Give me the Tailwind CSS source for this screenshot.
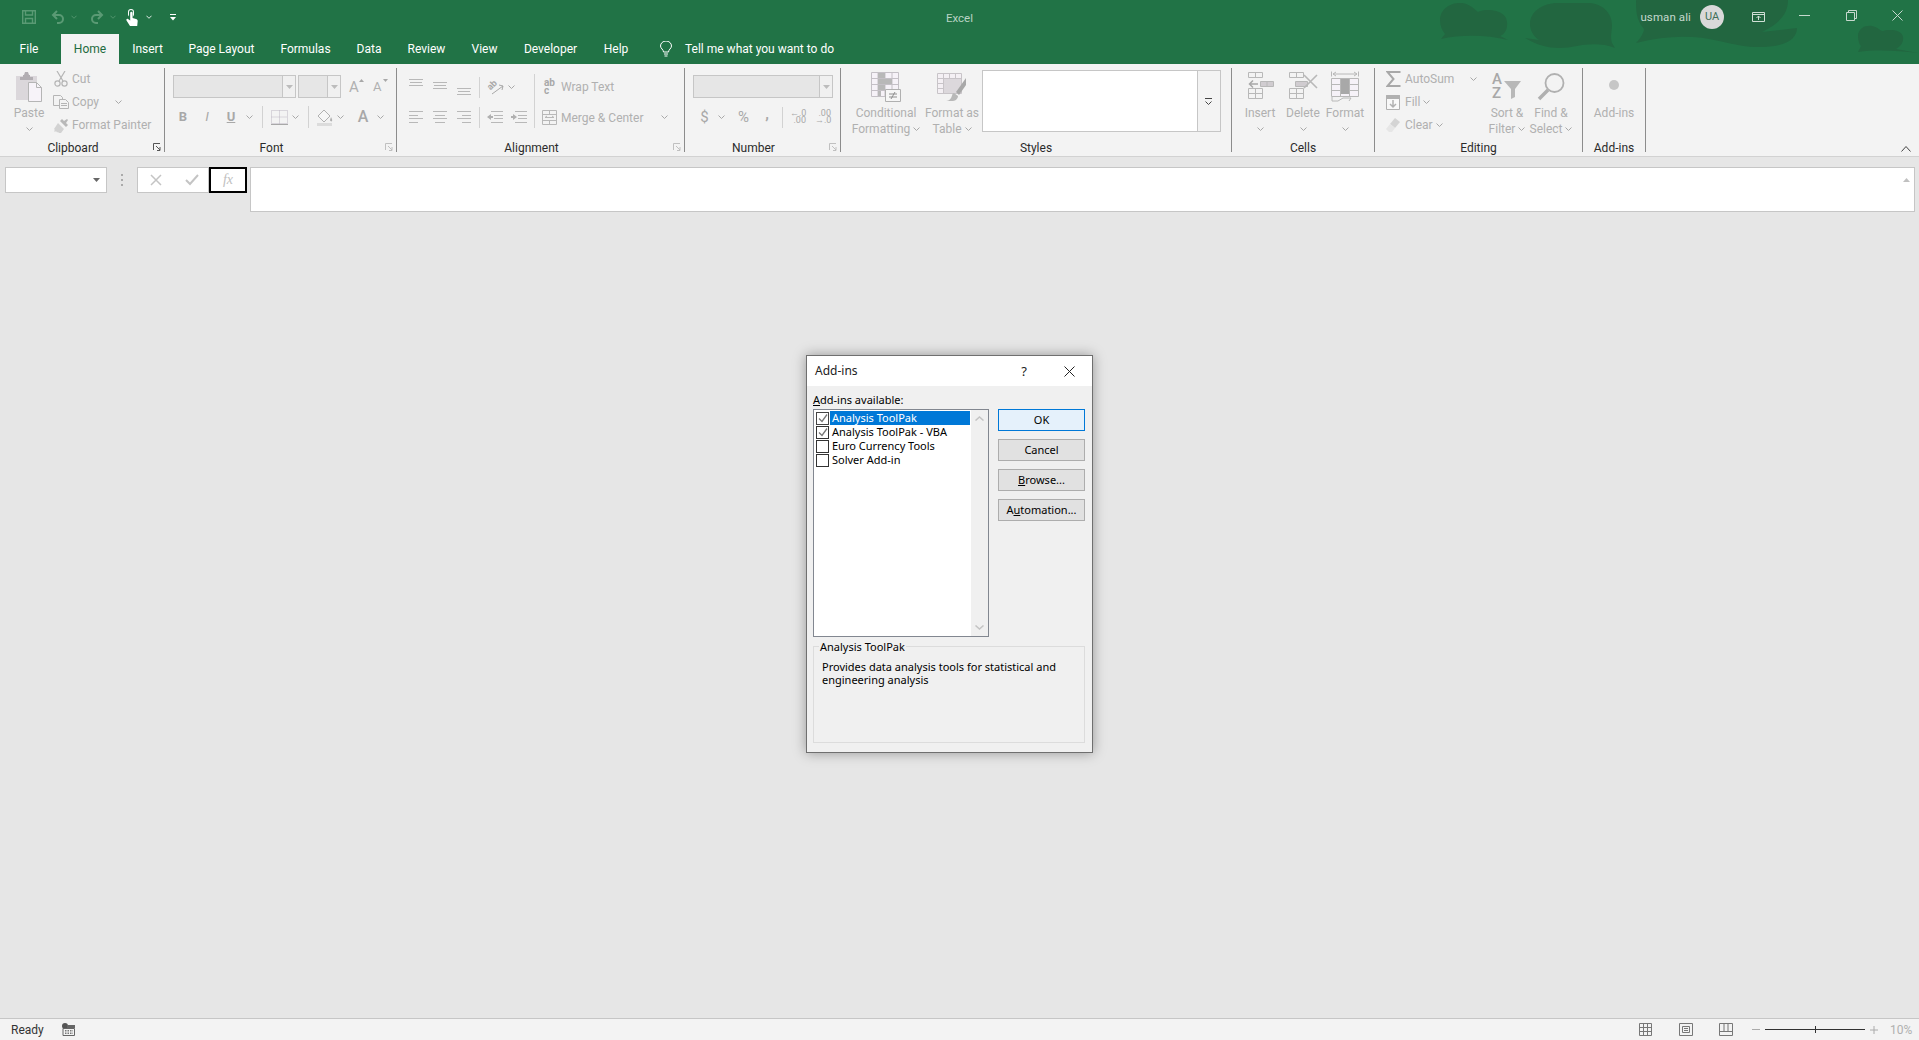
<!DOCTYPE html>
<html lang="en">
<head>
  <meta charset="UTF-8" />
  <title>Excel - Add-ins</title>
  <script src="https://cdn.jsdelivr.net/npm/@tailwindcss/browser@4"></script>
</head>
<body class="bg-[#e6e6e6] overflow-hidden">

<!-- shared icons -->
<svg class="hidden">
  <symbol id="chev" viewBox="0 0 7 4"><path d="M.5.5 3.500 3.500 6.500.5" fill="none" stroke="#a8a8a8"/></symbol>
  <symbol id="chevw" viewBox="0 0 7 4"><path d="M.5.5 3.500 3.500 6.500.5" fill="none" stroke="currentColor"/></symbol>
  <symbol id="launch" viewBox="0 0 8 8"><path d="M.5 7V.5H7M3 3l4 4M7 4v3.500H4" fill="none" stroke="currentColor"/></symbol>
  <symbol id="tri" viewBox="0 0 7 4"><path d="M0 0h7L3.500 4z" fill="currentColor"/></symbol>
  <symbol id="alignL" viewBox="0 0 14 12"><path d="M0 .5h14M0 4.500h9M0 7.500h14M0 11.500h9" stroke="#b8b8b8"/></symbol>
  <symbol id="alignC" viewBox="0 0 14 12"><path d="M0 .5h14M2 4.500h10M0 7.500h14M2 11.500h10" stroke="#b8b8b8"/></symbol>
  <symbol id="alignR" viewBox="0 0 14 12"><path d="M0 .5h14M5 4.500h9M0 7.500h14M5 11.500h9" stroke="#b8b8b8"/></symbol>
  <symbol id="lines3" viewBox="0 0 14 7"><path d="M0 .5h14M1 3.500h12M0 6.500h14" stroke="#b8b8b8"/></symbol>
</svg>

<div class="relative w-[1919px] h-[1040px] flex flex-col font-[Roboto] text-[12px] leading-[16px]">

  <!-- title bar + tabs -->
  <header class="relative h-[64px] bg-[#217346] text-white shrink-0 overflow-hidden">
    <svg class="absolute top-0 left-[1420px] w-[499px] h-[64px]" viewBox="0 0 499 64" fill="#226640">
      <path d="M20 20C20 8 32 2 42 3c8 1 12 6 16 9 8-4 24-2 28 6 3 8 0 16-6 18l8 4c-20-5-46-6-67-1l4-5C22 30 20 26 20 20z"/>
      <path d="M110 24c0-12 12-21 28-21h30c14 0 24 10 24 22 0 6-2 12 0 18l3 5c-12-5-28-4-38-2-16 3-32 4-52-8l14 2c-6-4-9-10-9-16z"/>
      <path d="M216 0h152c0 12-6 22-26 32l35-4c0 8-6 14-18 17-18 4-36 2-60-4-24-6-52-6-83 2 6-6 8-12 8-14C216 20 216 10 216 0z"/>
      <path d="M438 36c0-8 8-11 14-10 5 1 8 4 10 5 6-2 20-2 21 6 1 5-3 10-7 12l22 4c-18-2-40-4-60-1l3-6c-2-2-3-6-3-10z"/>
    </svg>

    <div class="relative grid grid-cols-[1fr_auto_1fr] h-[34px] items-center">
      <div class="flex items-center pl-[22px]">
        <svg class="w-[14px] h-[14px]" viewBox="0 0 14 14" fill="none" stroke="#5a9a74" stroke-width="1.400"><path d="M.7.7h12.600v12.600H.7zM3.500.7v4.300h7V.7M3.500 13.300V8.500h7v4.800"/></svg>
        <svg class="ml-[15px] w-[14px] h-[14px]" viewBox="0 0 14 14" fill="none" stroke="#5a9a74" stroke-width="2"><path d="M6 1 2 5l4 4M2 5h6a4 4 0 0 1 0 8H6"/></svg>
        <svg class="ml-[6px] w-[6px] h-[4px] text-[#5a9a74]"><use href="#chevw"/></svg>
        <svg class="ml-[13px] w-[14px] h-[14px]" viewBox="0 0 14 14" fill="none" stroke="#5a9a74" stroke-width="2"><path d="m8 1 4 4-4 4M12 5H6a4 4 0 0 0 0 8h2"/></svg>
        <svg class="ml-[6px] w-[6px] h-[4px] text-[#5a9a74]"><use href="#chevw"/></svg>
        <svg class="ml-[10px] w-[12px] h-[17px]" viewBox="0 0 12 17" fill="#fff"><path d="M2 3a3 3 0 0 1 6 0v2.500a3 3 0 0 1-1 2V3a2 2 0 0 0-4 0v4.500a3 3 0 0 1-1-2z"/><path d="M4.200 4a1.200 1.200 0 0 1 2.400 0v5l3.400 1c1 .3 1.700 1 1.700 2l-.5 5H4L.5 11.500C0 10.500 1 9.500 2 10l2.200 1.500z"/></svg>
        <svg class="ml-[8px] w-[6px] h-[4px] text-white"><use href="#chevw"/></svg>
        <svg class="ml-[18px] w-[6px] h-[7px]" viewBox="0 0 6 7"><path d="M0 .5h6" stroke="#fff"/><path d="M0 3h6L3 6.500z" fill="#fff"/></svg>
      </div>
      <div class="text-[#b9d3c4] text-[11.500px] mt-px">Excel</div>
      <div class="flex items-center justify-end pr-[16px]">
        <span class="text-[#c6d9ce] text-[11.500px] tracking-[0.1px]">usman ali</span>
        <span class="ml-[9px] w-[24px] h-[24px] rounded-full bg-[#d9d9d9] text-[#3f6f58] text-[11px] flex items-center justify-center">UA</span>
        <svg class="ml-[28px] w-[13px] h-[10px]" viewBox="0 0 13 10" fill="none" stroke="#d0e0d6"><path d="M.5.5h12v9H.5zM.5 2.500h12M6.500 8V4M4.500 6l2-2 2 2"/></svg>
        <svg class="ml-[34px] w-[11px] h-[1px] mb-[4px]" viewBox="0 0 11 1"><path d="M0 .5h11" stroke="#c6d9ce"/></svg>
        <svg class="ml-[36px] w-[11px] h-[11px] mb-[3px]" viewBox="0 0 11 11" fill="none" stroke="#c6d9ce"><path d="M.5 2.500h8v8h-8zM2.500 2.500v-2h8v8h-2"/></svg>
        <svg class="ml-[35px] w-[11px] h-[11px] mb-[3px]" viewBox="0 0 11 11" stroke="#c6d9ce"><path d="m.5.5 10 10M10.500.5l-10 10"/></svg>
      </div>
    </div>

    <nav class="relative flex h-[30px] items-center text-center whitespace-nowrap">
      <a class="w-[61px] pr-[3px]">File</a>
      <a class="w-[58px] h-[30px] leading-[30px] bg-[#f3f3f3] text-[#1f6b40]">Home</a>
      <a class="w-[57px]">Insert</a>
      <a class="w-[91px]">Page Layout</a>
      <a class="w-[77px]">Formulas</a>
      <a class="w-[50px]">Data</a>
      <a class="w-[65px]">Review</a>
      <a class="w-[51px]">View</a>
      <a class="w-[81px]">Developer</a>
      <a class="w-[50px]">Help</a>
      <svg class="ml-[19px] w-[12px] h-[16px]" viewBox="0 0 12 16" fill="none" stroke="#fff"><path d="M3.500 11C3.500 8.500.5 7.500.5 5a5.500 5 0 0 1 11 0c0 2.500-3 3.500-3 6zM4 13h4M4.500 15h3"/></svg>
      <span class="ml-[13px]">Tell me what you want to do</span>
    </nav>
  </header>

  <!-- ribbon -->
  <div class="relative flex h-[93px] shrink-0 pt-[4px] bg-[#f3f3f3] border-b border-[#d2d2d2] text-[#b0b0b0] whitespace-nowrap">

    <!-- Clipboard -->
    <section class="relative w-[165px] h-[84px] border-r border-[#8c8c8c]">
      <div class="flex h-[72px]">
        <div class="ml-[7px] w-[44px] pt-[4px] flex flex-col items-center">
          <svg class="w-[28px] h-[30px] mb-[3px]" viewBox="0 0 28 30"><path d="M1 4h21v24H1z" fill="#dbd7db"/><path d="M8 3h1l1-3h3l1 3h1v2h3v3H5V5h3z" fill="#b2aeb2"/><path d="M13.500 10.500h8l5 5v14h-13z" fill="#f7f3f9" stroke="#b5b5b5"/><path d="M21.500 10.500v5h5" fill="none" stroke="#b5b5b5"/></svg>
          <div>Paste</div>
          <svg class="mt-[6px] w-[7px] h-[4px]"><use href="#chev"/></svg>
        </div>
        <div class="ml-[2px] flex flex-col gap-px">
          <div class="flex items-center h-[22px]">
            <svg class="w-[16px] h-[16px]" viewBox="0 0 16 16" fill="none" stroke="#b5b5b5" stroke-width="1.200"><path d="M4 0 10 10M12 0 6 10"/><circle cx="4.500" cy="12.500" r="2.600"/><circle cx="11.500" cy="12.500" r="2.600"/></svg>
            <span class="ml-[3px]">Cut</span>
          </div>
          <div class="flex items-center h-[22px]">
            <svg class="w-[16px] h-[14px]" viewBox="0 0 16 14" fill="#f3f3f3" stroke="#b5b5b5"><path d="M.5.5h7l2 2v8h-9z"/><path d="M6.500 4.500h6l3 3v6h-9z"/><path d="M8 8.500h6M8 10.500h6" /></svg>
            <span class="ml-[3px] w-[28px]">Copy</span>
            <svg class="ml-[15px] w-[7px] h-[4px]"><use href="#chev"/></svg>
          </div>
          <div class="flex items-center h-[22px]">
            <svg class="w-[16px] h-[15px]" viewBox="0 0 16 15"><path d="M9 1l2 2 3-2 1 1-2 3 2 2-2 2-6-6z" fill="#b8b8b8"/><path d="M5 5l6 6-3 4H6l-1-1-1 .5L3 13l-1 1-1-1 1-1-1-1z" fill="#d2d2d2"/></svg>
            <span class="ml-[3px]">Format Painter</span>
          </div>
        </div>
      </div>
      <div class="text-center text-[#2b2b2b] pr-[18px]">Clipboard</div>
      <svg class="absolute right-[3px] bottom-[1px] w-[8px] h-[8px] text-[#555]"><use href="#launch"/></svg>
    </section>

    <!-- Font -->
    <section class="relative w-[232px] h-[84px] border-r border-[#8c8c8c]">
      <div class="h-[72px] pt-[7px]">
        <div class="flex items-center">
          <div class="ml-[8px] w-[123px] h-[23px] flex justify-end border border-[#c6c6c6] bg-[#e6e6e6]">
            <div class="w-[13px] bg-[#f0f0f0] border-l border-[#c6c6c6] flex items-center justify-center"><svg class="w-[7px] h-[4px] text-[#bcbcbc]"><use href="#tri"/></svg></div>
          </div>
          <div class="ml-[2px] w-[43px] h-[23px] flex justify-end border border-[#c6c6c6] bg-[#e6e6e6]">
            <div class="w-[13px] bg-[#f0f0f0] border-l border-[#c6c6c6] flex items-center justify-center"><svg class="w-[7px] h-[4px] text-[#bcbcbc]"><use href="#tri"/></svg></div>
          </div>
          <div class="ml-[8px] w-[13px] text-[15px] relative">A<svg class="absolute top-0 right-[-2px] w-[5px] h-[3px] rotate-180 text-[#a8a8a8]"><use href="#tri"/></svg></div>
          <div class="ml-[11px] w-[13px] text-[13px] relative">A<svg class="absolute top-0 right-[-2px] w-[5px] h-[3px] text-[#a8a8a8]"><use href="#tri"/></svg></div>
        </div>
        <div class="flex items-center h-[22px] mt-[8px]">
          <div class="ml-[6px] w-[24px] text-center font-bold text-[13px] text-[#a8a8a8]">B</div>
          <div class="w-[24px] text-center italic text-[13px] font-['Liberation_Sans'] text-[#a8a8a8]">I</div>
          <div class="w-[24px] text-center underline text-[13px] font-bold text-[#a8a8a8]">U</div>
          <svg class="ml-[3px] w-[7px] h-[4px]"><use href="#chev"/></svg>
          <div class="ml-[9px] w-px h-[22px] bg-[#d2d2d2]"></div>
          <svg class="ml-[8px] w-[17px] h-[15px]" viewBox="0 0 17 15" fill="none" stroke="#bdb7c2" stroke-dasharray="1 1"><path d="M.5.5h16v13H.5zM8.500.5v13M.5 7h16"/><path d="M0 14.500h17" stroke="#a8a8a8" stroke-dasharray="none"/></svg>
          <svg class="ml-[4px] w-[7px] h-[4px]"><use href="#chev"/></svg>
          <div class="ml-[9px] w-px h-[22px] bg-[#d2d2d2]"></div>
          <svg class="ml-[8px] w-[16px] h-[17px]" viewBox="0 0 16 17"><path d="M7 1 1 7l6 6 6-6z" fill="#f6f6f6" stroke="#b0b0b0"/><path d="M14 8c1 2 1.500 3 1 4s-2 0-2-1z" fill="#b0b0b0"/><path d="M0 14h15v3H0z" fill="#dcdcdc"/></svg>
          <svg class="ml-[4px] w-[7px] h-[4px]"><use href="#chev"/></svg>
          <div class="ml-[13px] w-[12px] text-center text-[16px] font-medium text-[#a8a8a8]">A</div>
          <svg class="ml-[8px] w-[7px] h-[4px]"><use href="#chev"/></svg>
        </div>
      </div>
      <div class="text-center text-[#2b2b2b] pr-[18px]">Font</div>
      <svg class="absolute right-[3px] bottom-[1px] w-[8px] h-[8px] text-[#c0c0c0]"><use href="#launch"/></svg>
    </section>

    <!-- Alignment -->
    <section class="relative w-[288px] h-[84px] border-r border-[#8c8c8c]">
      <div class="flex h-[72px]">
        <div class="w-[137px] pt-[8px]">
          <div class="flex items-center h-[22px]">
            <div class="ml-[12px] w-[14px] h-[22px] pt-[3px]"><svg class="block w-[14px] h-[7px]"><use href="#lines3"/></svg></div>
            <div class="ml-[10px] w-[14px] h-[22px] pt-[6px]"><svg class="block w-[14px] h-[7px]"><use href="#lines3"/></svg></div>
            <div class="ml-[10px] w-[14px] h-[22px] pt-[12px]"><svg class="block w-[14px] h-[7px]"><use href="#lines3"/></svg></div>
            <div class="ml-[8px] w-px h-[21px] bg-[#d2d2d2]"></div>
            <div class="relative ml-[7px] w-[17px] h-[16px]">
              <span class="absolute left-0 top-0 -rotate-45 text-[9px] leading-[12px] font-bold text-[#a8a8a8]">ab</span>
              <svg class="absolute inset-0 w-[17px] h-[16px]" viewBox="0 0 17 16" fill="none" stroke="#a8a8a8"><path d="M5 15 16 7M12 6l4 1-1 4"/></svg>
            </div>
            <svg class="ml-[4px] w-[7px] h-[4px]"><use href="#chev"/></svg>
          </div>
          <div class="flex items-center h-[22px] mt-[8px]">
            <svg class="ml-[12px] w-[14px] h-[12px]"><use href="#alignL"/></svg>
            <svg class="ml-[10px] w-[14px] h-[12px]"><use href="#alignC"/></svg>
            <svg class="ml-[10px] w-[14px] h-[12px]"><use href="#alignR"/></svg>
            <div class="ml-[8px] w-px h-[21px] bg-[#d2d2d2]"></div>
            <svg class="ml-[7px] w-[16px] h-[12px]" viewBox="0 0 16 12"><path d="M4 .5h12M7 4.500h9M7 7.500h9M4 11.500h12" stroke="#b8b8b8"/><path d="M0 6l4-3v2h2v2H4v2z" fill="#b0b0b0"/></svg>
            <svg class="ml-[8px] w-[16px] h-[12px]" viewBox="0 0 16 12"><path d="M4 .5h12M7 4.500h9M7 7.500h9M4 11.500h12" stroke="#b8b8b8"/><path d="M6 6 2 3v2H0v2h2v2z" fill="#b0b0b0"/></svg>
          </div>
        </div>
        <div class="mt-[6px] w-px h-[54px] bg-[#d2d2d2]"></div>
        <div class="pt-[8px]">
          <div class="flex items-center h-[22px]">
            <div class="ml-[9px] w-[13px] text-[10px] leading-[8px] font-bold text-[#a8a8a8]">ab<br>c</div>
            <span class="ml-[4px]">Wrap Text</span>
          </div>
          <div class="flex items-center h-[22px] mt-[8px]">
            <svg class="ml-[7px] w-[15px] h-[15px]" viewBox="0 0 15 15" fill="none" stroke="#b8b8b8"><path d="M.5.5h14v14H.5zM.5 4.500h14M.5 10.500h14M7.500.5v4M7.500 10.500v4M3 7.500h9M3 7.500l2-1.500M12 7.500 10 6"/></svg>
            <span class="ml-[4px] w-[85px] pt-px">Merge &amp; Center</span>
            <svg class="ml-[15px] w-[7px] h-[4px]"><use href="#chev"/></svg>
          </div>
        </div>
      </div>
      <div class="text-center text-[#2b2b2b] pr-[18px]">Alignment</div>
      <svg class="absolute right-[3px] bottom-[1px] w-[8px] h-[8px] text-[#c0c0c0]"><use href="#launch"/></svg>
    </section>

    <!-- Number -->
    <section class="relative w-[156px] h-[84px] border-r border-[#8c8c8c]">
      <div class="h-[72px] pt-[7px]">
        <div class="ml-[8px] w-[140px] h-[23px] flex justify-end border border-[#c6c6c6] bg-[#e6e6e6]">
          <div class="w-[13px] bg-[#f0f0f0] border-l border-[#c6c6c6] flex items-center justify-center"><svg class="w-[7px] h-[4px] text-[#bcbcbc]"><use href="#tri"/></svg></div>
        </div>
        <div class="flex items-center h-[22px] mt-[8px]">
          <div class="ml-[15px] w-[9px] text-center text-[15px] text-[#a8a8a8]">$</div>
          <svg class="ml-[9px] w-[7px] h-[4px]"><use href="#chev"/></svg>
          <div class="ml-[12px] w-[13px] text-center text-[15px] text-[#a8a8a8]">%</div>
          <div class="ml-[14px] w-[6px] text-center text-[15px] font-bold text-[#a8a8a8] -mt-[6px]">,</div>
          <div class="ml-[12px] w-px h-[21px] bg-[#d2d2d2]"></div>
          <div class="ml-[7px] w-[16px] text-[9px] leading-[7px] text-right text-[#a8a8a8]">&#8592;.0<br>.00</div>
          <div class="ml-[9px] w-[16px] text-[9px] leading-[7px] text-right text-[#a8a8a8]">.00<br>&#8594;.0</div>
        </div>
      </div>
      <div class="text-center text-[#2b2b2b] pr-[18px]">Number</div>
      <svg class="absolute right-[3px] bottom-[1px] w-[8px] h-[8px] text-[#c0c0c0]"><use href="#launch"/></svg>
    </section>

    <!-- Styles -->
    <section class="w-[391px] h-[84px] border-r border-[#8c8c8c]">
      <div class="flex h-[72px]">
        <div class="ml-[5px] w-[80px] pt-[4px] flex flex-col items-center">
          <svg class="w-[30px] h-[30px] mb-[3px]" viewBox="0 0 30 30" fill="none">
            <path d="M.5.5h27v24H.5zM.5 6.500h27M.5 12.500h27M.5 18.500h27M7 .5v24M14 .5v24M21 .5v24" fill="#f6f2f8" stroke="#c4c0c6"/>
            <path d="M7 1h7v5H7zM7 7h14v5H7zM7 13h7v5H7zM7 19h3v5H7z" fill="#b8b8b8"/>
            <path d="M14.500 17.500h15v12h-15z" fill="#f6f6f6" stroke="#b0b0b0"/>
            <path d="M18 22h8M18 25h8M24 20l-4 7" stroke="#8f8f8f"/>
          </svg>
          <div>Conditional</div>
          <div class="flex items-center">Formatting<svg class="ml-[3px] w-[7px] h-[4px]"><use href="#chev"/></svg></div>
        </div>
        <div class="w-[52px] pt-[4px] flex flex-col items-center">
          <svg class="w-[30px] h-[30px] mb-[3px]" viewBox="0 0 30 30" fill="none">
            <path d="M.5 1.500h24v20H.5zM.5 6.500h24M.5 11.500h24M.5 16.500h24M6.500 1.500v20M12.500 1.500v20M18.500 1.500v20" fill="#f4f0f4" stroke="#c8c4c8"/>
            <path d="M7 7h17v14H7z" fill="#dcd8dc"/>
            <path d="M29 6 19 20l3 3 7-10z" fill="#a8a8a8"/>
            <path d="M17 21c-2 0-2 4-3 5-1 2-3 3-5 3h7c3 0 5-3 5-5z" fill="#b8b8b8"/>
          </svg>
          <div>Format as</div>
          <div class="flex items-center">Table<svg class="ml-[3px] w-[7px] h-[4px]"><use href="#chev"/></svg></div>
        </div>
        <div class="ml-[4px] mt-[2px] w-[239px] h-[62px] flex justify-end bg-white border border-[#c6c6c6]">
          <div class="w-[23px] bg-[#f3f3f3] border-l border-[#c6c6c6] flex items-center justify-center">
            <svg class="w-[7px] h-[7px] mr-[2px]" viewBox="0 0 7 7" fill="none" stroke="#444"><path d="M0 .5h7M.5 3.500l3 3 3-3"/></svg>
          </div>
        </div>
      </div>
      <div class="text-center text-[#2b2b2b]">Styles</div>
    </section>

    <!-- Cells -->
    <section class="w-[143px] h-[84px] border-r border-[#8c8c8c]">
      <div class="flex h-[72px] pl-[7px]">
        <div class="w-[42px] pt-[4px] flex flex-col items-center">
          <svg class="w-[27px] h-[30px] mb-[3px]" viewBox="0 0 27 30" fill="none" stroke="#b8b8b8">
            <path d="M1.500.5h14v5h-14zM8.500.5v5M1.500 16.500h14v10h-14zM1.500 21.500h14M8.500 16.500v10"/>
            <path d="M13.500 9.500h13v5h-13zM20 9.500v5" fill="#d0ccd0"/>
            <path d="M11 12H3M6 8.500 2.500 12 6 15.500" stroke-width="1.500" stroke="#a8a8a8"/>
          </svg>
          <div>Insert</div>
          <svg class="mt-[6px] w-[7px] h-[4px]"><use href="#chev"/></svg>
        </div>
        <div class="w-[44px] pt-[4px] flex flex-col items-center">
          <svg class="w-[30px] h-[30px] mb-[3px]" viewBox="0 0 30 30" fill="none" stroke="#b8b8b8">
            <path d="M1.500.5h14v5h-14zM8.500.5v5M1.500 16.500h14v10h-14zM1.500 21.500h14M8.500 16.500v10"/>
            <path d="M7.500 9.500h12v5h-12z" fill="#d0ccd0"/>
            <path d="m16 3 13 13M29 3 16 16" stroke-width="1.600"/>
          </svg>
          <div>Delete</div>
          <svg class="mt-[6px] w-[7px] h-[4px]"><use href="#chev"/></svg>
        </div>
        <div class="w-[40px] pt-[3px] flex flex-col items-center">
          <svg class="w-[28px] h-[31px] mb-[3px]" viewBox="0 0 28 31" fill="none" stroke="#b8b8b8">
            <path d="M.5.5v5M27.500.5v5M2 3h24M2 3l3-2M2 3l3 2M26 3l-3-2M26 3l-3 2"/>
            <path d="M.5 7.500h27v18H.5zM.5 13.500h27M.5 19.500h27M9.500 7.500v18M18.500 7.500v18" fill="#f6f2f8"/>
            <path d="M10 8h8v15h-8z" fill="#a8a8a8" stroke="none"/>
            <path d="M1 26v4h6l5-3h8l-2 3"/>
          </svg>
          <div>Format</div>
          <svg class="mt-[6px] w-[7px] h-[4px]"><use href="#chev"/></svg>
        </div>
      </div>
      <div class="text-center text-[#2b2b2b]">Cells</div>
    </section>

    <!-- Editing -->
    <section class="w-[208px] h-[84px] border-r border-[#8c8c8c]">
      <div class="flex h-[72px] pl-[11px]">
        <div class="w-[99px] flex flex-col gap-px">
          <div class="flex items-center h-[22px]">
            <svg class="w-[15px] h-[16px]" viewBox="0 0 15 16" fill="none" stroke="#a8a8a8" stroke-width="2"><path d="M14.500 1H1.500l6 7-6 7h13"/></svg>
            <span class="ml-[4px] w-[50px]">AutoSum</span>
            <svg class="ml-[15px] w-[7px] h-[4px]"><use href="#chev"/></svg>
          </div>
          <div class="flex items-center h-[22px]">
            <svg class="w-[15px] h-[15px]" viewBox="0 0 15 15" fill="#f8f8f8" stroke="#b0b0b0"><path d="M.5.5h13v14H.5z"/><path d="M.5.500h13v3H.5z" fill="#b0b0b0"/><path d="M7 5v7M4 9l3 3 3-3" fill="none" stroke-width="1.500"/></svg>
            <span class="ml-[4px]">Fill</span>
            <svg class="ml-[3px] w-[7px] h-[4px]"><use href="#chev"/></svg>
          </div>
          <div class="flex items-center h-[22px]">
            <svg class="w-[15px] h-[14px]" viewBox="0 0 15 14"><path d="M9 0l5 4-5 6-5-4z" fill="#d4d4d4"/><path d="M4 6l5 4-3 4H3L0 11z" fill="#e6e6e6"/></svg>
            <span class="ml-[4px]">Clear</span>
            <svg class="ml-[3px] w-[7px] h-[4px]"><use href="#chev"/></svg>
          </div>
        </div>
        <div class="w-[44px] pt-[4px] flex flex-col items-center">
          <div class="h-[30px] w-[30px] mb-[3px] flex items-start">
            <div class="w-[11px] text-[15px] leading-[14px] font-medium text-[#a8a8a8]">A<br>Z</div>
            <svg class="mt-[9px] w-[19px] h-[18px]" viewBox="0 0 19 18"><path d="M1 0h17l-6 8v8l-4 2V8z" fill="#b8b8b8"/></svg>
          </div>
          <div>Sort &amp;</div>
          <div class="flex items-center">Filter<svg class="ml-[3px] w-[7px] h-[4px]"><use href="#chev"/></svg></div>
        </div>
        <div class="w-[44px] pt-[4px] flex flex-col items-center">
          <svg class="w-[28px] h-[30px] mb-[3px]" viewBox="0 0 28 30" fill="none" stroke="#b0b0b0"><circle cx="17.500" cy="11" r="9" stroke-width="1.800"/><path d="M11 18 2 27" stroke-width="3.500"/></svg>
          <div>Find &amp;</div>
          <div class="flex items-center">Select<svg class="ml-[3px] w-[7px] h-[4px]"><use href="#chev"/></svg></div>
        </div>
      </div>
      <div class="text-center text-[#2b2b2b]">Editing</div>
    </section>

    <!-- Add-ins -->
    <section class="w-[63px] h-[84px] border-r border-[#8c8c8c]">
      <div class="h-[72px] flex flex-col items-center pt-[12px]">
        <div class="w-[10px] h-[10px] rounded-full bg-[#c6c6c6] mb-[15px]"></div>
        <div>Add-ins</div>
      </div>
      <div class="text-center text-[#2b2b2b]">Add-ins</div>
    </section>

    <svg class="absolute right-[8px] bottom-[4px] w-[10px] h-[6px]" viewBox="0 0 10 6" fill="none" stroke="#444"><path d="m.5 5.500 4.500-5 4.500 5"/></svg>
  </div>

  <!-- formula bar -->
  <div class="flex-1 pt-[10px]">
    <div class="flex items-start">
      <div class="ml-[5px] w-[102px] h-[26px] bg-white border border-[#c6c6c6] flex items-center justify-end pr-[6px]">
        <svg class="w-[7px] h-[4px] text-[#666]"><use href="#tri"/></svg>
      </div>
      <div class="ml-[14px] w-[2px] h-[26px] flex flex-col justify-center gap-[3px]">
        <div class="w-[2px] h-[2px] bg-[#aaa]"></div><div class="w-[2px] h-[2px] bg-[#aaa]"></div><div class="w-[2px] h-[2px] bg-[#aaa]"></div>
      </div>
      <div class="ml-[14px] w-[72px] h-[26px] bg-white border border-[#c6c6c6] flex items-center">
        <svg class="ml-[12px] w-[12px] h-[12px]" viewBox="0 0 12 12" stroke="#c4c4c4" stroke-width="1.500"><path d="m1 1 10 10M11 1 1 11"/></svg>
        <svg class="ml-[23px] w-[14px] h-[12px]" viewBox="0 0 14 12" fill="none" stroke="#c4c4c4" stroke-width="2"><path d="m1 6 4 4 8-9"/></svg>
      </div>
      <div class="w-[38px] h-[26px] bg-white border-2 border-black flex items-center justify-center font-['Liberation_Serif'] italic text-[14px] text-[#c0c0c0]">fx</div>
      <div class="ml-[3px] w-[1665px] h-[45px] bg-white border border-[#c6c6c6] flex justify-end pt-[10px] pr-[4px]">
        <svg class="w-[7px] h-[4px] rotate-180 text-[#c0c0c0]"><use href="#tri"/></svg>
      </div>
    </div>
  </div>

  <!-- status bar -->
  <footer class="h-[22px] shrink-0 bg-[#f3f3f3] border-t border-[#c6c6c6] flex items-center text-[#333]">
    <span class="ml-[11px] w-[51px]">Ready</span>
    <svg class="w-[13px] h-[13px]" viewBox="0 0 13 13"><circle cx="3" cy="3" r="3" fill="#555"/><path d="M1 5.500h11.500v7H1z" fill="#f3f3f3" stroke="#666"/><path d="M5 2h8v3H5z" fill="#666"/><path d="M3 7.500h8M3 9h8M3 10.500h8" stroke="#777" stroke-dasharray="1.500 1"/></svg>
    <svg class="ml-[1564px] w-[13px] h-[13px]" viewBox="0 0 13 13" fill="none" stroke="#777"><path d="M.5.5h12v12H.5zM.5 4.500h12M.5 8.500h12M4.500.5v12M8.500.5v12"/></svg>
    <svg class="ml-[27px] w-[14px] h-[13px]" viewBox="0 0 14 13" fill="none" stroke="#777"><path d="M.5.5h13v12H.5zM3.500 3.500h7v6h-7zM5 5.500h4M5 7.500h4"/></svg>
    <svg class="ml-[26px] w-[14px] h-[13px]" viewBox="0 0 14 13" fill="none" stroke="#777"><path d="M.5 12.500V.5h13v12zM.5 8.500h13M5 .5v8M9 .5v8"/></svg>
    <svg class="ml-[19px] w-[8px] h-[1px]" viewBox="0 0 8 1"><path d="M0 .5h8" stroke="#aaa"/></svg>
    <div class="ml-[5px] w-[100px] h-px bg-[#333] relative"><div class="absolute left-[50px] top-[-3px] w-px h-[7px] bg-[#333]"></div></div>
    <svg class="ml-[5px] w-[8px] h-[8px]" viewBox="0 0 8 8"><path d="M0 4h8M4 0v8" stroke="#aaa"/></svg>
    <span class="ml-[12px] text-[#b0b0b0]">10%</span>
  </footer>

  <!-- Add-ins dialog -->
  <div class="absolute top-[355px] left-[806px] w-[287px] h-[398px] flex flex-col bg-[#f0f0f0] border border-[#6f6f6f] shadow-[0_0_12px_rgba(0,0,0,0.35)] font-['Noto_Sans'] text-[11px] leading-[14px] text-black">
    <div class="h-[30px] bg-white flex items-center pl-[8px] text-[12px] text-[#222]">
      <span class="w-[201px]">Add-ins</span>
      <span class="w-[16px] text-center text-[13px]">?</span>
      <svg class="ml-[32px] w-[11px] h-[11px]" viewBox="0 0 11 11" stroke="#222"><path d="m.5.5 10 10M10.500.5l-10 10"/></svg>
    </div>
    <div class="pl-[6px] pt-[7px]">
      <div><u>A</u>dd-ins available:</div>
      <div class="flex mt-[2px]">
        <div class="w-[176px] h-[228px] flex bg-white border border-[#828790]">
          <ul class="flex-1 pt-px">
            <li class="flex items-center h-[14px]">
              <span class="ml-[2px] w-[13px] h-[13px] border border-[#444] flex items-center justify-center"><svg class="w-[10px] h-[9px]" viewBox="0 0 10 9" fill="none" stroke="#777" stroke-width="1.300"><path d="m1 4.500 3 3 5-7"/></svg></span>
              <span class="ml-px mr-px flex-1 h-[14px] pl-[2px] bg-[#0078d7] text-white">Analysis ToolPak</span>
            </li>
            <li class="flex items-center h-[14px]">
              <span class="ml-[2px] w-[13px] h-[13px] border border-[#333] flex items-center justify-center"><svg class="w-[10px] h-[9px]" viewBox="0 0 10 9" fill="none" stroke="#777" stroke-width="1.300"><path d="m1 4.500 3 3 5-7"/></svg></span>
              <span class="ml-[3px]">Analysis ToolPak - VBA</span>
            </li>
            <li class="flex items-center h-[14px]">
              <span class="ml-[2px] w-[13px] h-[13px] border border-[#333]"></span>
              <span class="ml-[3px]">Euro Currency Tools</span>
            </li>
            <li class="flex items-center h-[14px]">
              <span class="ml-[2px] w-[13px] h-[13px] border border-[#333]"></span>
              <span class="ml-[3px]">Solver Add-in</span>
            </li>
          </ul>
          <div class="w-[17px] bg-[#f0f0f0] flex flex-col justify-between items-center py-[6px]">
            <svg class="w-[9px] h-[5px] rotate-180" viewBox="0 0 9 5" fill="none" stroke="#c4c4c4" stroke-width="1.500"><path d="m.5.5 4 3.500 4-3.500"/></svg>
            <svg class="w-[9px] h-[5px]" viewBox="0 0 9 5" fill="none" stroke="#c4c4c4" stroke-width="1.500"><path d="m.5.5 4 3.500 4-3.500"/></svg>
          </div>
        </div>
        <div class="ml-[9px] w-[87px] flex flex-col gap-[8px] text-center leading-[20px]">
          <button class="h-[22px] bg-[#e5f1fb] border border-[#0078d7]">OK</button>
          <button class="h-[22px] bg-[#e1e1e1] border border-[#adadad]">Cancel</button>
          <button class="h-[22px] bg-[#e1e1e1] border border-[#adadad]"><u>B</u>rowse...</button>
          <button class="h-[22px] bg-[#e1e1e1] border border-[#adadad]">A<u>u</u>tomation...</button>
        </div>
      </div>
      <div class="relative mt-[9px] w-[272px] h-[97px] border border-[#dcdcdc] pl-[8px] pt-[13px] leading-[13px]">
        <span class="absolute top-[-7px] left-[5px] px-px bg-[#f0f0f0] leading-[14px]">Analysis ToolPak</span>
        Provides data analysis tools for statistical and<br>engineering analysis
      </div>
    </div>
  </div>

</div>
</body>
</html>
